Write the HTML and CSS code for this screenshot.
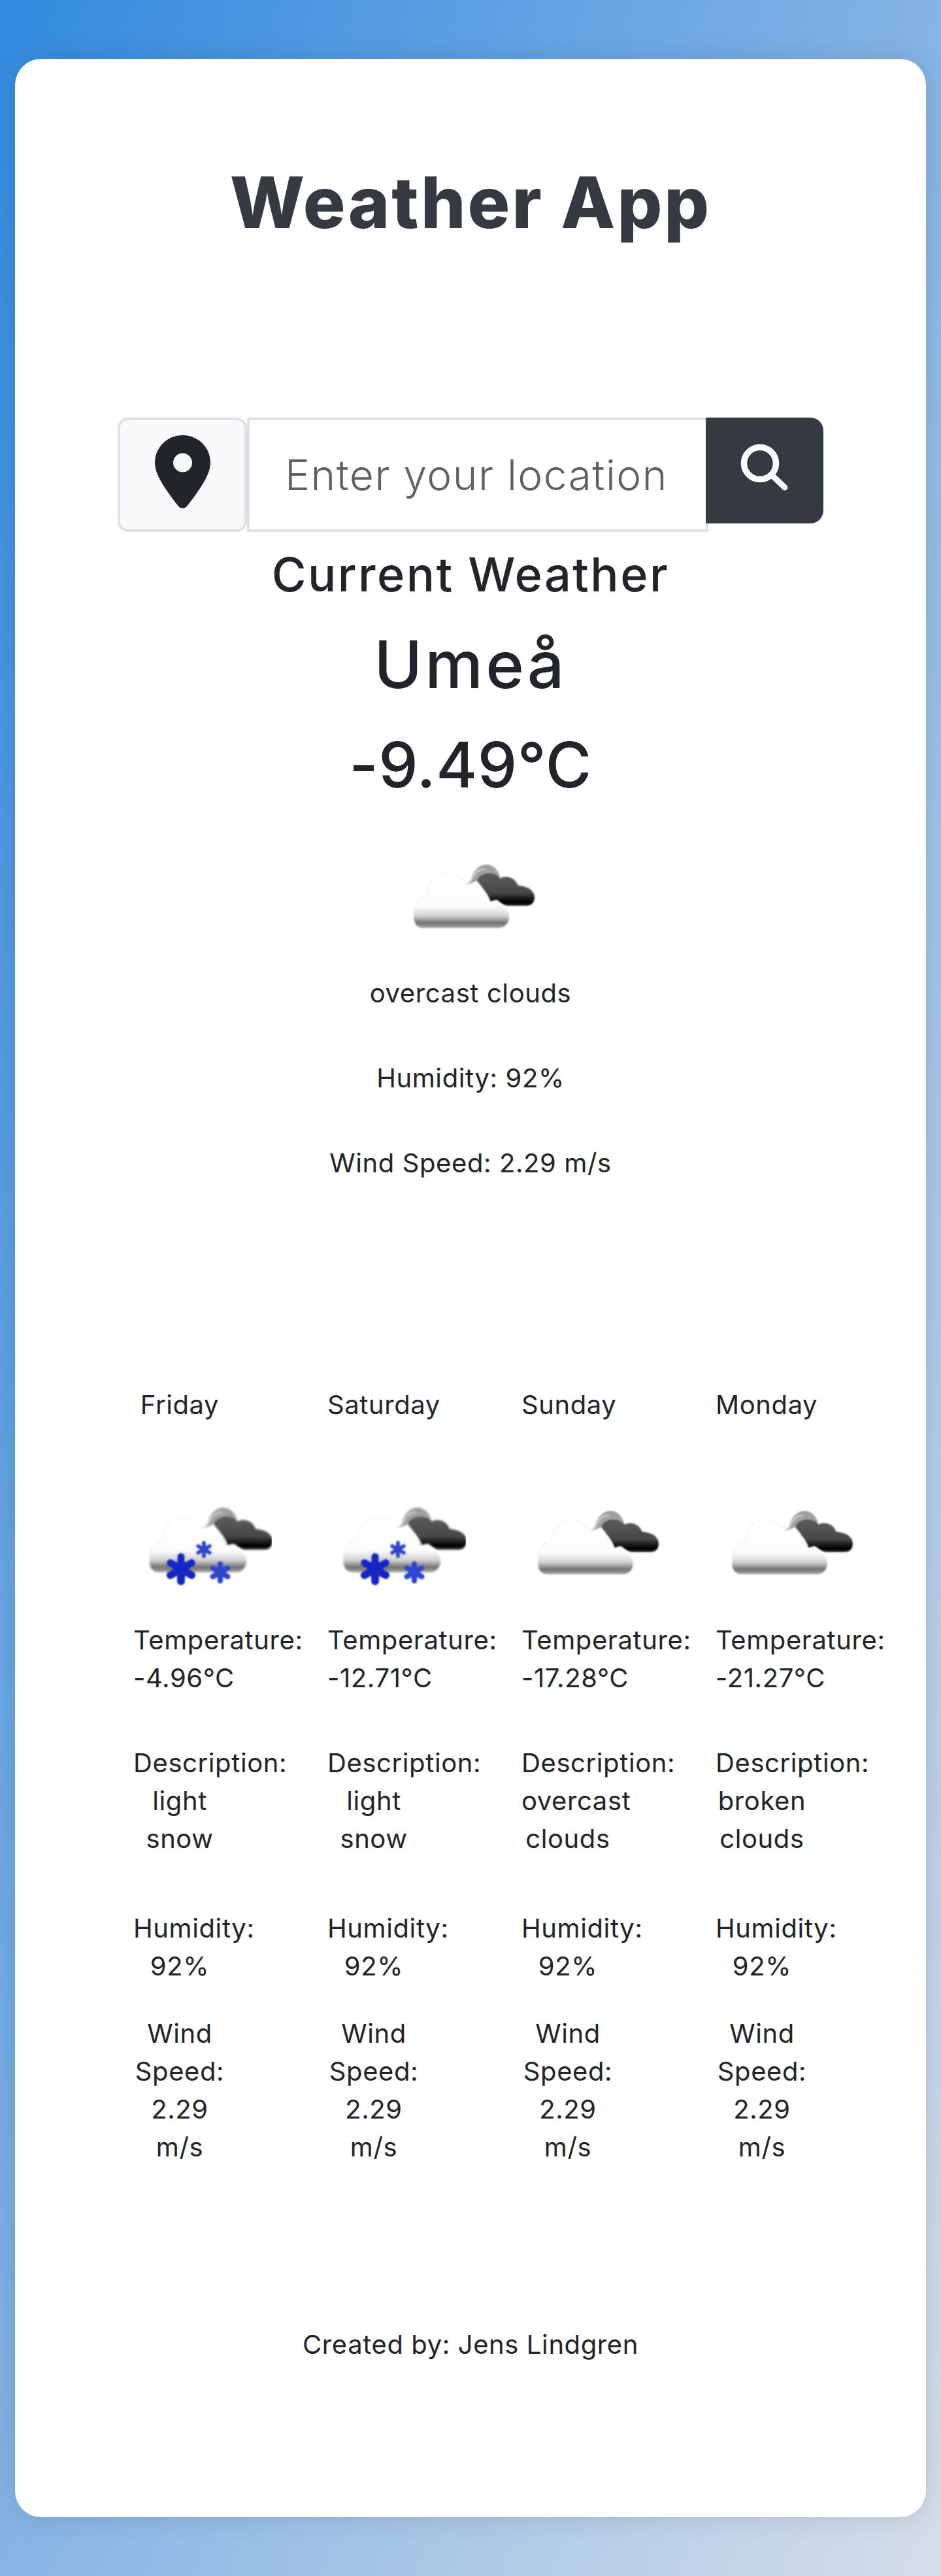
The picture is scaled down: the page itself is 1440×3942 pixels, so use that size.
FILE: index.html
```html
<!DOCTYPE html>
<html lang="en">
<head>
    <meta charset="UTF-8">
    <meta name="viewport" content="width=device-width, initial-scale=1.0">
    <title>Weather App</title>
    <link rel="stylesheet" href="styles.css">
</head>
<body>
    <!-- Shared weather icon parts -->
    <svg class="defs" width="0" height="0" aria-hidden="true">
        <defs>
            <linearGradient id="whiteCloud" x1="0" y1="0" x2="0" y2="1">
                <stop offset="0" stop-color="#ffffff"/>
                <stop offset="0.6" stop-color="#fcfcfc"/>
                <stop offset="0.78" stop-color="#d2d2d2"/>
                <stop offset="0.91" stop-color="#717171"/>
                <stop offset="1" stop-color="#a8a8a8"/>
            </linearGradient>
            <linearGradient id="darkCloud" x1="0" y1="0" x2="0" y2="1">
                <stop offset="0" stop-color="#5c5c5c"/>
                <stop offset="0.6" stop-color="#484848"/>
                <stop offset="0.88" stop-color="#030303"/>
                <stop offset="1" stop-color="#222222"/>
            </linearGradient>
            <filter id="soft" x="-10%" y="-10%" width="120%" height="120%">
                <feGaussianBlur stdDeviation="1"/>
            </filter>
            <g id="flake">
                <path d="M0-7.500V7.500M-6.500-3.750 6.500 3.750M-6.500 3.750 6.500-3.750" fill="none" stroke="currentColor" stroke-width="4.800" stroke-linecap="round"/>
                <circle r="4.500" fill="currentColor"/>
            </g>
            <g id="clouds" filter="url(#soft)">
                <path d="M92 85C96 82 99 80 102 72 106 60 115 53 124 53 134 53 142 60 145 72L130 66C120 64 112 70 110 78Z" fill="#a0a0a0"/>
                <path d="M94 83C100 80 102 76 105 70 109 63 115 60 122 60" fill="none" stroke="#e6e6e6" stroke-width="1.600"/>
                <path d="M110 78C112 70 120 65 130 66 138 67 143 70 146 74 153 69 168 72 172 84 174 86 178 85 183 87 192 89 198 96 198 103 198 110 194 116 186 116H158C150 116 146 110 140 107 136 108 133 108 130 110 128 100 118 88 110 78Z" fill="url(#darkCloud)"/>
                <path d="M27 150H143C153 150 159 142 159 133 159 123 150 113 130 112 128 100 118 88 95 85 88 74 76 67 63 67 48 67 36 78 33 98 20 102 13 117 13 132 13 142 18 150 27 150Z" fill="url(#whiteCloud)"/>
                <path d="M95 85C88 74 76 67 63 67 48 67 36 78 33 98 20 102 13 117 13 132" fill="none" stroke="#efefef" stroke-width="1.200"/>
            </g>
            <g id="snow-clouds" filter="url(#soft)">
                <use href="#clouds" transform="translate(-1 -6) scale(1.02)"/>
                <g class="snow-big"><use href="#flake" transform="translate(61 142) scale(2.500)"/></g>
                <g class="snow-small">
                    <use href="#flake" transform="translate(121 147) scale(1.750)"/>
                    <use href="#flake" transform="translate(96 112) scale(1.350)"/>
                </g>
            </g>
        </defs>
    </svg>

    <main class="card">
        <h1 class="title">Weather App</h1>

        <form class="search">
            <span class="search-pin">
                <svg viewBox="0 0 85 113" width="85" height="113">
                    <path fill-rule="evenodd" fill="#212529" d="M42.500 0C65.500 0 85 18 85 42 85 60 70 82 49.500 108 46 113 39 113 35.500 108 15 82 0 60 0 42 0 18 19.500 0 42.500 0ZM42.500 27.500A14.500 14.500 0 1 0 42.500 56.500 14.500 14.500 0 1 0 42.500 27.500Z"/>
                </svg>
            </span>
            <span class="search-input">Enter your location</span>
            <button class="search-btn" type="button" aria-label="Search">
                <svg viewBox="0 0 80 80" width="80" height="80">
                    <circle cx="33" cy="29" r="24.500" fill="none" stroke="#fff" stroke-width="9.500"/>
                    <path d="M52 48 71 66" stroke="#fff" stroke-width="9" stroke-linecap="round"/>
                </svg>
            </button>
        </form>

        <section class="current">
            <h3 class="current-label">Current Weather</h3>
            <h2 class="current-city">Umeå</h2>
            <h2 class="current-temp">-9.49°C</h2>
            <svg class="icon" viewBox="0 0 200 200"><use href="#clouds"/></svg>
            <p>overcast clouds</p>
            <p>Humidity: 92%</p>
            <p>Wind Speed: 2.29 m/s</p>
        </section>

        <section class="forecast">
            <div class="day">
                <p class="day-name">Friday</p>
                <svg class="icon" viewBox="0 0 200 200"><use href="#snow-clouds"/></svg>
                <p class="temp">Temperature:<br>-4.96°C</p>
                <p class="desc">Description:<br>light<br>snow</p>
                <p class="hum">Humidity:<br>92%</p>
                <p class="wind">Wind<br>Speed:<br>2.29<br>m/s</p>
            </div>
            <div class="day">
                <p class="day-name">Saturday</p>
                <svg class="icon" viewBox="0 0 200 200"><use href="#snow-clouds"/></svg>
                <p class="temp">Temperature:<br>-12.71°C</p>
                <p class="desc">Description:<br>light<br>snow</p>
                <p class="hum">Humidity:<br>92%</p>
                <p class="wind">Wind<br>Speed:<br>2.29<br>m/s</p>
            </div>
            <div class="day">
                <p class="day-name">Sunday</p>
                <svg class="icon" viewBox="0 0 200 200"><use href="#clouds"/></svg>
                <p class="temp">Temperature:<br>-17.28°C</p>
                <p class="desc">Description:<br>overcast<br>clouds</p>
                <p class="hum">Humidity:<br>92%</p>
                <p class="wind">Wind<br>Speed:<br>2.29<br>m/s</p>
            </div>
            <div class="day">
                <p class="day-name">Monday</p>
                <svg class="icon" viewBox="0 0 200 200"><use href="#clouds"/></svg>
                <p class="temp">Temperature:<br>-21.27°C</p>
                <p class="desc">Description:<br>broken<br>clouds</p>
                <p class="hum">Humidity:<br>92%</p>
                <p class="wind">Wind<br>Speed:<br>2.29<br>m/s</p>
            </div>
        </section>

        <footer class="credit">Created by: Jens Lindgren</footer>
    </main>
</body>
</html>
```

FILE: styles.css
```css
* {
    box-sizing: border-box;
}

body {
    margin: 0;
    height: 3942px;
    padding: 90px 23px;
    background: linear-gradient(to bottom right, #338ae0 0%, #d6dee9 100%);
    font-family: "Inter", "Liberation Sans", sans-serif;
    font-size: 40px;
    line-height: 58px;
    letter-spacing: 0.6px;
    color: #212529;
}

.defs {
    position: absolute;
}

/* Card */
.card {
    height: 3762px;
    background-color: #fff;
    border-radius: 40px;
    box-shadow: 0 0 40px rgba(0, 0, 0, 0.12);
    padding-top: 157px;
    text-align: center;
}

.title {
    margin: 0;
    font-size: 108px;
    line-height: 125px;
    letter-spacing: 3px;
    font-weight: 800;
    color: #343a40;
}

/* Search */
.search {
    display: flex;
    align-items: flex-start;
    height: 175px;
    margin: 267px 0 0 157px;
}

.search-pin {
    width: 198px;
    height: 175px;
    display: flex;
    align-items: center;
    justify-content: center;
    padding-bottom: 8px;
    background-color: #f8f9fa;
    border: 4px solid #dee2e6;
    border-radius: 16px;
}

.search-input {
    width: 706px;
    height: 175px;
    display: flex;
    align-items: center;
    padding-left: 54px;
    font-size: 64px;
    letter-spacing: 1.500px;
    font-weight: 300;
    color: #5c6166;
    border: 4px solid #dee2e6;
    white-space: nowrap;
}

.search-btn {
    width: 180px;
    height: 162px;
    display: flex;
    align-items: center;
    justify-content: center;
    margin-left: -4px;
    padding: 0;
    background-color: #343a40;
    border: none;
    border-radius: 0 20px 20px 0;
}

/* Current weather */
.current-label {
    margin: 25px 0 0;
    font-size: 72px;
    line-height: 80px;
    letter-spacing: 2.500px;
    font-weight: 500;
}

.current-city,
.current-temp {
    margin: 40px 0 0;
    font-size: 100px;
    line-height: 116px;
    letter-spacing: 4px;
    font-weight: 500;
}

.current-temp {
    margin-top: 37px;
    font-size: 96px;
    letter-spacing: 0.500px;
}

.icon {
    display: block;
    width: 200px;
    height: 200px;
}

.current .icon {
    margin: 42px auto 21px;
}

.current p {
    margin: 0 0 72px;
}

/* Forecast */
.forecast {
    display: grid;
    grid-template-columns: repeat(4, 297px);
    margin: 312px 0 0 181px;
}

.day {
    width: 142px;
}

.day p {
    margin: 0;
}

.day .icon {
    margin: 80px 0 22px 12px;
}

.day .desc {
    margin-top: 72px;
}

.day .hum {
    margin-top: 79px;
}

.day .wind {
    margin-top: 45px;
}

.snow-big {
    color: #1626c4;
}

.snow-small {
    color: #2f46cc;
}

.credit {
    margin-top: 244px;
}
```
